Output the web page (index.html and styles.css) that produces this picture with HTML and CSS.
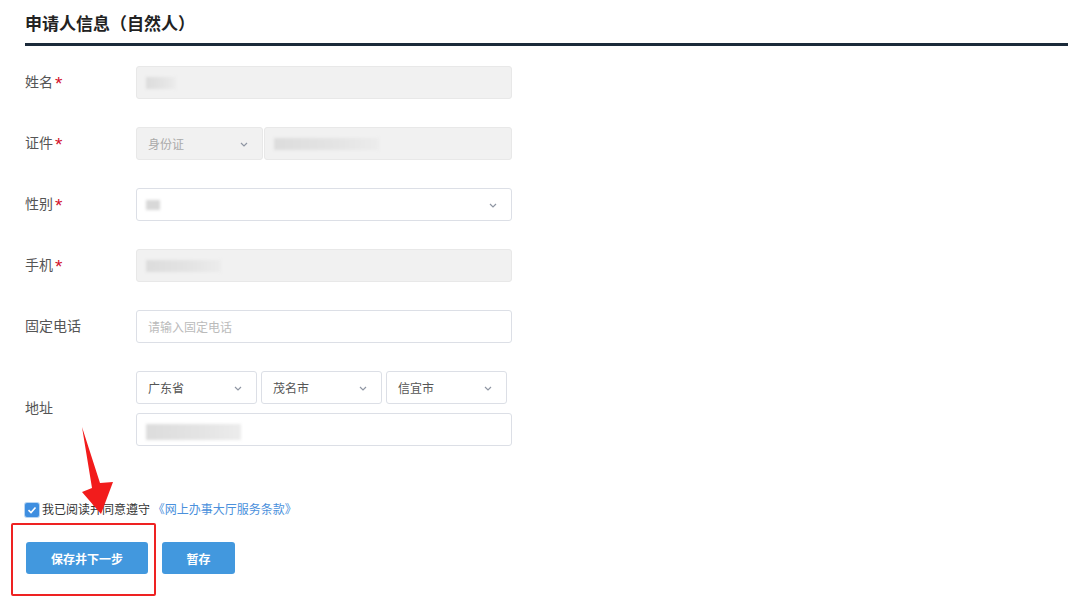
FILE: index.html
```html
<!DOCTYPE html>
<html lang="zh-CN">
<head>
  <meta charset="UTF-8">
  <title>申请人信息</title>
  <link rel="stylesheet" href="styles.css">
</head>
<body>

  <div class="page">
    <h2 class="title">申请人信息（自然人）</h2>

    <!-- 表单 -->
    <div class="form">
      <div class="row">
        <div class="label">姓名<i class="req">*</i></div>
        <div class="field">
          <div class="input disabled"><span class="blur" style="width:30px"></span></div>
        </div>
      </div>

      <div class="row">
        <div class="label">证件<i class="req">*</i></div>
        <div class="field inline">
          <div class="input disabled select id-type"><span class="ph">身份证</span><svg class="arrow" viewBox="0 0 8 5"><polyline points="1,1 4,4 7,1"/></svg></div>
          <div class="input disabled grow"><span class="blur" style="width:105px"></span></div>
        </div>
      </div>

      <div class="row">
        <div class="label">性别<i class="req">*</i></div>
        <div class="field">
          <div class="input select"><span class="blur small" style="width:14px"></span><svg class="arrow" viewBox="0 0 8 5"><polyline points="1,1 4,4 7,1"/></svg></div>
        </div>
      </div>

      <div class="row">
        <div class="label">手机<i class="req">*</i></div>
        <div class="field">
          <div class="input disabled"><span class="blur" style="width:75px"></span></div>
        </div>
      </div>

      <div class="row">
        <div class="label">固定电话</div>
        <div class="field">
          <div class="input"><span class="ph light">请输入固定电话</span></div>
        </div>
      </div>

      <div class="row">
        <div class="label">地址</div>
        <div class="field stack">
          <div class="inline gap4">
            <div class="input select area"><span class="val">广东省</span><svg class="arrow" viewBox="0 0 8 5"><polyline points="1,1 4,4 7,1"/></svg></div>
            <div class="input select area"><span class="val">茂名市</span><svg class="arrow" viewBox="0 0 8 5"><polyline points="1,1 4,4 7,1"/></svg></div>
            <div class="input select area"><span class="val">信宜市</span><svg class="arrow" viewBox="0 0 8 5"><polyline points="1,1 4,4 7,1"/></svg></div>
          </div>
          <div class="input"><span class="blur tall" style="width:95px"></span></div>
        </div>
      </div>
    </div>

    <div class="agree"><span class="checkbox"><svg viewBox="0 0 14 14"><polyline points="3.5,7.2 6,9.5 10.5,4.5"/></svg></span>我已阅读并同意遵守 <a class="link">《网上办事大厅服务条款》</a></div>

    <div class="actions">
      <button class="btn btn-next">保存并下一步</button>
      <button class="btn btn-save">暂存</button>
    </div>
  </div>

  <!-- 标注 -->
  <div class="mark-box"></div>
  <svg class="mark-arrow" viewBox="0 0 1080 602">
    <polygon points="82,427 100,483 113,482 101,514 82,492 92,488"/>
  </svg>

</body>
</html>
```

FILE: styles.css
```css
* { box-sizing: border-box; margin: 0; padding: 0; }

body {
  font-family: "Noto Sans CJK SC", "Noto Sans", sans-serif;
  background: #fff;
  color: #555;
  width: 1080px;
  height: 602px;
  overflow: hidden;
  position: relative;
}

.page {
  padding: 0 12px 0 25px;
}

.title {
  font-size: 17px;
  line-height: 24px;
  font-weight: bold;
  color: #222;
  padding: 11px 0 8px;
  border-bottom: 3px solid #1b2a3a;
}

.form {
  margin-top: 20px;
  display: flex;
  flex-direction: column;
  gap: 28px;
}

.row {
  display: flex;
  align-items: center;
}

.label {
  width: 111px;
  font-size: 14px;
  line-height: 20px;
  height: 20px;
  margin-top: -3px;
  color: #555;
}

.req {
  font-style: normal;
  color: #d3112b;
  font-family: "Liberation Sans", sans-serif;
  font-size: 19px;
  line-height: 0;
  position: relative;
  top: 3px;
  margin-left: 2px;
}

.field {
  width: 376px;
}

.inline {
  display: flex;
  gap: 1px;
}

.gap4 { gap: 4px; }

.stack {
  display: flex;
  flex-direction: column;
  gap: 9px;
}

.input {
  height: 33px;
  border: 1px solid #dcdfe6;
  border-radius: 3px;
  background: #fff;
  display: flex;
  align-items: center;
  padding: 0 11px;
  font-size: 12px;
  position: relative;
}

.input.disabled {
  background: #f1f1f1;
  border-color: #e8e8e8;
}

.grow { flex: 1; }

.id-type { width: 127px; }
.area { width: 121px; }

.select .arrow {
  position: absolute;
  right: 14px;
  top: 14px;
  width: 8px;
  height: 5px;
  fill: none;
  stroke: #8f96a3;
  stroke-width: 1.2;
}

.ph { color: #aaa; }
.ph.light { color: #bbb; }
.val { color: #555; }

.blur {
  display: block;
  height: 12px;
  margin-left: -2px;
  background: linear-gradient(90deg, #dcdcdc, #e4e4e4 60%, #ececec);
  filter: blur(1.5px);
}

.blur.small { height: 10px; background: #d8d8d8; }
.blur.tall { height: 16px; margin-top: 4px; }

.agree {
  margin-top: 55px;
  height: 16px;
  line-height: 16px;
  font-size: 12px;
  color: #333;
  white-space: nowrap;
}

.checkbox {
  width: 14px;
  height: 14px;
  border-radius: 2px;
  background: #3e8ee0;
  box-shadow: 0 0 0 1px #b9d6f3;
  margin: 0 3px 0 0;
  display: inline-block;
  vertical-align: -3px;
}

.checkbox svg {
  display: block;
  width: 14px;
  height: 14px;
  fill: none;
  stroke: #fff;
  stroke-width: 1.6;
}

.link {
  color: #4a90dc;
}

.actions {
  margin-top: 25px;
  display: flex;
  gap: 14px;
  padding-left: 1px;
}

.btn {
  height: 32px;
  border: none;
  border-radius: 3px;
  background: #4298de;
  color: #fff;
  font-family: inherit;
  font-size: 12px;
  font-weight: bold;
}

.btn-next { width: 122px; }
.btn-save { width: 73px; }

.mark-box {
  position: absolute;
  left: 11px;
  top: 523px;
  width: 145px;
  height: 73px;
  border: 2.5px solid #ee2222;
  border-radius: 2px;
}

.mark-arrow {
  position: absolute;
  left: 0;
  top: 0;
  width: 1080px;
  height: 602px;
  fill: #f21c1c;
}
```
